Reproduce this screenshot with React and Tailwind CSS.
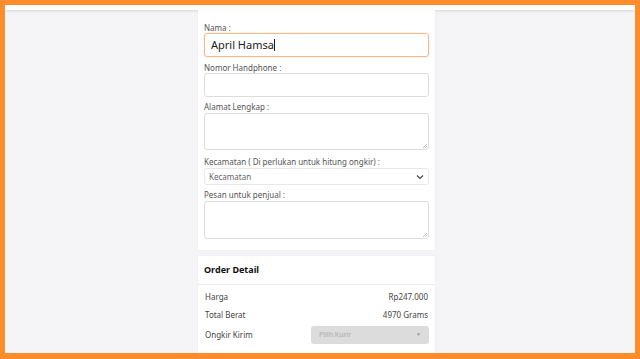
import React from "react";

function Label({ children, className = "" }) {
  return (
    <div className={"h-[10px] text-[8px] leading-[10px] text-[#555] " + className}>{children}</div>
  );
}

function Grip() {
  return (
    <svg className="absolute right-[1px] bottom-[1px]" width="5" height="5" viewBox="0 0 5 5">
      <path d="M1 5 L5 1 M3 5 L5 3" stroke="#999" strokeWidth="0.6" />
    </svg>
  );
}

export default function App() {
  return (
    <div
      className="w-[640px] h-[359px] overflow-hidden bg-[#ff8c2b] pt-[5px] pl-[5px] pr-[5px] pb-[6px]"
      style={{ fontFamily: '"Noto Sans", "Open Sans", sans-serif' }}
    >
      <div className="w-full h-full bg-[#f5f5f7] flex flex-col overflow-hidden">
        <div className="h-[5px] bg-white shadow-[0_1px_3px_rgba(0,0,0,0.12)] shrink-0" />
        <div className="flex-1 flex justify-center">
          <div className="w-[237px] mr-[7px] flex flex-col gap-[6px]">
            <div className="bg-white px-[6px] pt-[13px] pb-[11px] flex flex-col shadow-[0_0_2px_rgba(0,0,0,0.05)]">
              <Label>Nama :</Label>
              <div className="h-[24px] border border-[#f5b88a] rounded-[3px] flex items-center px-[6px] shadow-[0_0_2px_rgba(255,140,43,0.3)]">
                <span className="text-[11px] text-[#222]">April Hamsa</span>
                <span className="w-px h-[12px] bg-[#222]" />
              </div>
              <Label className="mt-[6px]">Nomor Handphone :</Label>
              <div className="h-[24px] border border-[#dcdcdc] rounded-[3px]" />
              <Label className="mt-[5px]">Alamat Lengkap :</Label>
              <div className="mt-[1px] h-[37px] border border-[#dcdcdc] rounded-[3px] relative">
                <Grip />
              </div>
              <Label className="mt-[7px]">Kecamatan ( Di perlukan untuk hitung ongkir) :</Label>
              <div className="mt-[1px] h-[17px] border border-[#e8e8e8] rounded-[3px] flex items-center justify-between px-[4px]">
                <span className="text-[8px] text-[#666]">Kecamatan</span>
                <svg width="8" height="6" viewBox="0 0 8 6">
                  <path d="M1 1.5 L4 4.5 L7 1.5" stroke="#444" strokeWidth="1.2" fill="none" />
                </svg>
              </div>
              <Label className="mt-[5px]">Pesan untuk penjual :</Label>
              <div className="mt-[1px] h-[38px] border border-[#dcdcdc] rounded-[3px] relative">
                <Grip />
              </div>
            </div>
            <div className="bg-white flex flex-col shadow-[0_0_2px_rgba(0,0,0,0.05)] flex-1">
              <div className="h-[29px] px-[6px] flex items-center border-b border-[#eee]">
                <span className="text-[9px] font-bold text-[#111]">Order Detail</span>
              </div>
              <div className="px-[7px] pt-[3px] flex flex-col">
                <div className="flex justify-between items-center h-[18px] text-[8px] text-[#444]">
                  <span>Harga</span>
                  <span>Rp247.000</span>
                </div>
                <div className="flex justify-between items-center h-[18px] text-[8px] text-[#444]">
                  <span>Total Berat</span>
                  <span>4970 Grams</span>
                </div>
                <div className="flex justify-between items-center h-[22px] text-[8px] text-[#444]">
                  <span>Ongkir Kirim</span>
                  <div className="w-[118px] h-[18px] bg-[#dcdcdc] rounded-[3px] flex items-center justify-between px-[8px] -mr-[1px]">
                    <span className="text-[7px] text-[#aaa]">Pilih Kurir</span>
                    <span className="text-[5px] text-[#999]">▼</span>
                  </div>
                </div>
              </div>
            </div>
          </div>
        </div>
      </div>
    </div>
  );
}
